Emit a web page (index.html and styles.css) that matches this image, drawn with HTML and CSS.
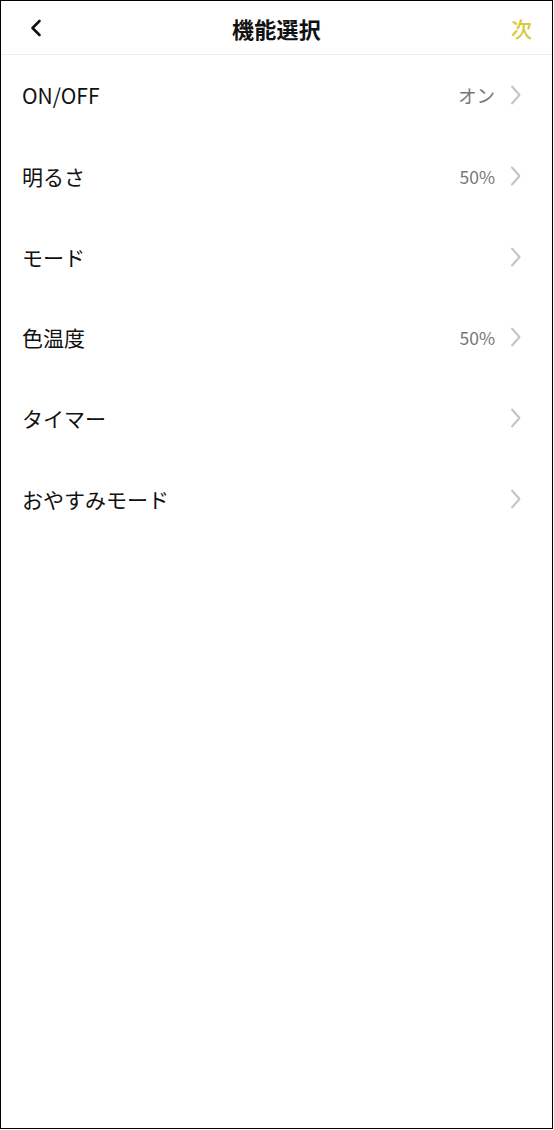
FILE: index.html
```html
<!DOCTYPE html>
<html lang="ja">
<head>
<meta charset="utf-8">
<title>機能選択</title>
<link rel="stylesheet" href="styles.css">
</head>
<body>
<div class="frame">
  <header class="nav">
    <button class="nav-back" aria-label="戻る">
      <svg width="14" height="18" viewBox="0 0 14 18"><path d="M10.5 2 L3.5 9 L10.5 16" fill="none" stroke="#111" stroke-width="2.6" stroke-linecap="round" stroke-linejoin="round"/></svg>
    </button>
    <h1 class="nav-title">機能選択</h1>
    <button class="nav-next">次</button>
  </header>
  <ul class="list">
    <li class="row"><span class="label">ON/OFF</span><span class="value">オン</span><svg class="chev" width="13" height="22" viewBox="0 0 13 22"><path d="M3 2.5 L10.5 11 L3 19.5" fill="none" stroke="#c4c4c4" stroke-width="2" stroke-linecap="round" stroke-linejoin="round"/></svg></li>
    <li class="row"><span class="label">明るさ</span><span class="value num">50%</span><svg class="chev" width="13" height="22" viewBox="0 0 13 22"><path d="M3 2.5 L10.5 11 L3 19.5" fill="none" stroke="#c4c4c4" stroke-width="2" stroke-linecap="round" stroke-linejoin="round"/></svg></li>
    <li class="row"><span class="label">モード</span><span class="value"></span><svg class="chev" width="13" height="22" viewBox="0 0 13 22"><path d="M3 2.5 L10.5 11 L3 19.5" fill="none" stroke="#c4c4c4" stroke-width="2" stroke-linecap="round" stroke-linejoin="round"/></svg></li>
    <li class="row"><span class="label">色温度</span><span class="value num">50%</span><svg class="chev" width="13" height="22" viewBox="0 0 13 22"><path d="M3 2.5 L10.5 11 L3 19.5" fill="none" stroke="#c4c4c4" stroke-width="2" stroke-linecap="round" stroke-linejoin="round"/></svg></li>
    <li class="row"><span class="label">タイマー</span><span class="value"></span><svg class="chev" width="13" height="22" viewBox="0 0 13 22"><path d="M3 2.5 L10.5 11 L3 19.5" fill="none" stroke="#c4c4c4" stroke-width="2" stroke-linecap="round" stroke-linejoin="round"/></svg></li>
    <li class="row"><span class="label">おやすみモード</span><span class="value"></span><svg class="chev" width="13" height="22" viewBox="0 0 13 22"><path d="M3 2.5 L10.5 11 L3 19.5" fill="none" stroke="#c4c4c4" stroke-width="2" stroke-linecap="round" stroke-linejoin="round"/></svg></li>
  </ul>
</div>
</body>
</html>
```
FILE: styles.css
```css
* { box-sizing: border-box; }
html, body { margin: 0; padding: 0; background: #fff; }
body {
  font-family: "Noto Sans CJK JP", "Noto Sans", sans-serif;
  color: #111;
}
.frame {
  width: 553px;
  height: 1129px;
  border: 1px solid #000;
  background: #fff;
  display: flex;
  flex-direction: column;
  overflow: hidden;
}
.nav {
  height: 54px;
  flex: none;
  display: grid;
  grid-template-columns: 72px 1fr 72px;
  align-items: center;
  border-bottom: 1px solid #ececec;
}
.nav-back, .nav-next {
  border: 0;
  background: none;
  padding: 0;
  font-family: inherit;
  cursor: pointer;
}
.nav-back {
  display: flex;
  align-items: center;
  padding-left: 28px;
  height: 100%;
}
.nav-title {
  margin: 0;
  text-align: center;
  font-size: 22px;
  font-weight: 700;
  letter-spacing: 0.3px;
  color: #111;
}
.nav-next {
  justify-self: end;
  padding-right: 20px;
  font-size: 21px;
  font-weight: 500;
  color: #d8c93a;
}
.list {
  list-style: none;
  margin: 0;
  padding: 0;
}
.row {
  height: 80.7px;
  display: flex;
  align-items: center;
  padding: 0 30px 0 21px;
}
.label {
  flex: 1;
  font-size: 21px;
  color: #111;
}
.value {
  font-size: 18.5px;
  color: #777;
  margin-right: 14px;
}
.value.num { font-size: 17.5px; }
.chev { flex: none; display: block; }
```
